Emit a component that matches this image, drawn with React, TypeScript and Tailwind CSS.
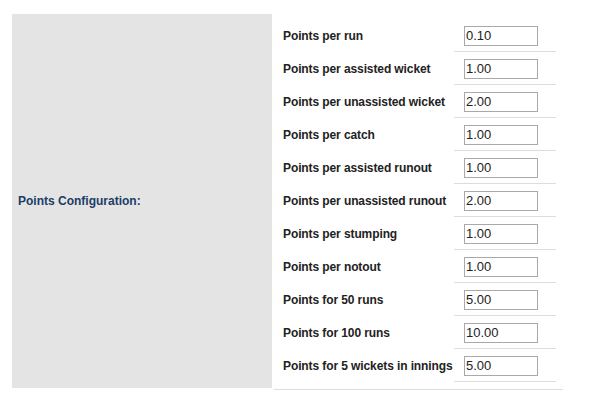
import React from "react";

const rows: [string, string][] = [
  ["Points per run", "0.10"],
  ["Points per assisted wicket", "1.00"],
  ["Points per unassisted wicket", "2.00"],
  ["Points per catch", "1.00"],
  ["Points per assisted runout", "1.00"],
  ["Points per unassisted runout", "2.00"],
  ["Points per stumping", "1.00"],
  ["Points per notout", "1.00"],
  ["Points for 50 runs", "5.00"],
  ["Points for 100 runs", "10.00"],
  ["Points for 5 wickets in innings", "5.00"],
];

export default function App() {
  return (
    <div
      className="w-[606px] h-[408px] bg-white pt-[14px] pl-[12px]"
      style={{ fontFamily: '"Liberation Sans", Arial, sans-serif' }}
    >
      <div className="flex items-start gap-[2px]">
        <div className="w-[260px] h-[374px] bg-[#e4e4e4] flex items-center pl-[6px]">
          <span className="text-[12px] font-bold text-[#1c3d66]">Points Configuration:</span>
        </div>
        <div className="w-[289px] pt-[5px] pb-[7px] border-b border-[#dddddd]">
          {rows.map(([label, value]) => (
            <div key={label} className="flex h-[33px]">
              <div className="w-[180px] pl-[9px] flex items-center pt-[1px]">
                <span className="text-[12px] font-bold text-[#222222] whitespace-nowrap tracking-[-0.1px]">{label}</span>
              </div>
              <div className="w-[102px] border-b border-[#dddddd] pl-[10px] pt-[7px]">
                <input
                  readOnly
                  defaultValue={value}
                  className="block w-[74px] h-[20px] border border-[#a9a9a9] pl-[1px] pr-[1px] pt-0 pb-[2px] leading-[16px] text-[13px] text-[#222222] outline-none"
                  style={{ fontFamily: '"Liberation Sans", Arial, sans-serif' }}
                />
              </div>
            </div>
          ))}
        </div>
      </div>
    </div>
  );
}
